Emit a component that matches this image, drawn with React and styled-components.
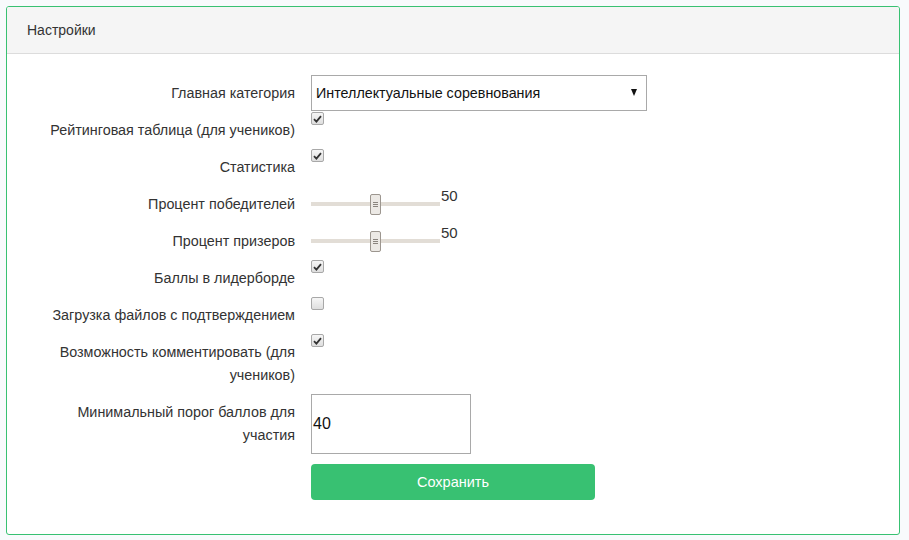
import React from "react";
import styled, { createGlobalStyle } from "styled-components";

const Global = createGlobalStyle`
  html, body { margin: 0; padding: 0; background: #f8fafc; }
  body { font-family: "Liberation Sans", Arial, sans-serif; font-size: 14px; color: #333; }
`;

const Page = styled.div`
  padding: 6px 9px 6px 6px;
`;

const Card = styled.div`
  border: 1px solid #38c172;
  border-radius: 3px;
  background: #fff;
  height: 527px;
  overflow: hidden;
`;

const CardHeader = styled.div`
  background: #f5f5f5;
  border-bottom: 1px solid #dcdcdc;
  height: 47px;
  padding: 0 20px;
  display: flex;
  align-items: center;
  font-size: 14px;
  color: #333;
  padding-bottom: 1px;
  box-sizing: border-box;
`;

const CardBody = styled.div`
  padding: 21px 0 0 32px;
`;

const Form = styled.div`
  display: grid;
  grid-template-columns: 256px 1fr;
  column-gap: 16px;
  align-items: start;
`;

const Label = styled.div`
  text-align: right;
  padding: 7px 0;
  line-height: 23px;
  font-size: 14.35px;
  color: #333;
`;

const Control = styled.div`
  display: flex;
  align-items: flex-start;
  min-height: 37px;
  box-sizing: border-box;
`;

const SelectBox = styled.div`
  width: 336px;
  height: 36px;
  box-sizing: border-box;
  border: 1px solid #a9a9a9;
  background: #fff;
  display: flex;
  align-items: center;
  justify-content: space-between;
  padding: 0 9px 0 4px;
  font-size: 14.3px;
  color: #111;
`;

const Arrow = styled.span`
  width: 0;
  height: 0;
  border-left: 3.5px solid transparent;
  border-right: 3.5px solid transparent;
  border-top: 7px solid #111;
  margin-top: -2px;
`;

const Check = styled.span`
  width: 13px;
  height: 13px;
  box-sizing: border-box;
  border: 1px solid #a8a8a8;
  border-radius: 2px;
  background: linear-gradient(#f6f6f6, #dedede);
  display: flex;
  align-items: center;
  justify-content: center;
`;

const SliderWrap = styled.div`
  display: flex;
  align-items: flex-start;
  padding-top: 5px;
`;

const Track = styled.div`
  position: relative;
  width: 129px;
  height: 4px;
  margin-top: 11px;
  background: #e2ddd6;
`;

const Thumb = styled.div`
  position: absolute;
  top: -8px;
  left: 59px;
  width: 11px;
  height: 21px;
  box-sizing: border-box;
  border: 1px solid #9c968f;
  border-radius: 2px;
  background: #ece9e5;
  display: flex;
  flex-direction: column;
  align-items: center;
  justify-content: center;
  gap: 1px;
`;

const Grip = styled.span`
  width: 5px;
  height: 1px;
  background: #8a847e;
`;

const SliderValue = styled.span`
  font-size: 15px;
  line-height: 17px;
  margin-left: 1px;
  margin-top: -4px;
  color: #333;
`;

const NumberInput = styled.div`
  width: 160px;
  height: 60px;
  box-sizing: border-box;
  border: 1px solid #a9a9a9;
  background: #fff;
  display: flex;
  align-items: center;
  padding-left: 1px;
  font-size: 16px;
  color: #111;
`;

const Button = styled.button`
  grid-column: 2;
  margin-top: 10px;
  width: 284px;
  height: 36px;
  border: none;
  border-radius: 4px;
  background: #38c172;
  color: #fff;
  font-family: "Liberation Sans", Arial, sans-serif;
  font-size: 14.5px;
  cursor: pointer;
`;

const CheckMark = () => (
  <svg width="9" height="8" viewBox="0 0 9 8">
    <path d="M1 4.2 L3.4 6.6 L8 1.2" fill="none" stroke="#333" strokeWidth="1.8" />
  </svg>
);

const CheckBox = ({ checked }) => <Check>{checked && <CheckMark />}</Check>;

const Slider = ({ value }) => (
  <SliderWrap>
    <Track>
      <Thumb>
        <Grip />
        <Grip />
        <Grip />
      </Thumb>
    </Track>
    <SliderValue>{value}</SliderValue>
  </SliderWrap>
);

const checks = [
  ["Рейтинговая таблица (для учеников)", true],
  ["Статистика", true],
];

export default function App() {
  return (
    <Page>
      <Global />
      <Card>
        <CardHeader>Настройки</CardHeader>
        <CardBody>
          <Form>
            <Label>Главная категория</Label>
            <Control>
              <SelectBox>
                <span>Интеллектуальные соревнования</span>
                <Arrow />
              </SelectBox>
            </Control>

            {checks.map(([t, c]) => (
              <React.Fragment key={t}>
                <Label>{t}</Label>
                <Control>
                  <CheckBox checked={c} />
                </Control>
              </React.Fragment>
            ))}

            <Label>Процент победителей</Label>
            <Control>
              <Slider value={50} />
            </Control>

            <Label>Процент призеров</Label>
            <Control>
              <Slider value={50} />
            </Control>

            <Label>Баллы в лидерборде</Label>
            <Control>
              <CheckBox checked />
            </Control>

            <Label>Загрузка файлов с подтверждением</Label>
            <Control>
              <CheckBox />
            </Control>

            <Label>Возможность комментировать (для учеников)</Label>
            <Control>
              <CheckBox checked />
            </Control>

            <Label>Минимальный порог баллов для участия</Label>
            <Control>
              <NumberInput>40</NumberInput>
            </Control>

            <Button>Сохранить</Button>
          </Form>
        </CardBody>
      </Card>
    </Page>
  );
}
